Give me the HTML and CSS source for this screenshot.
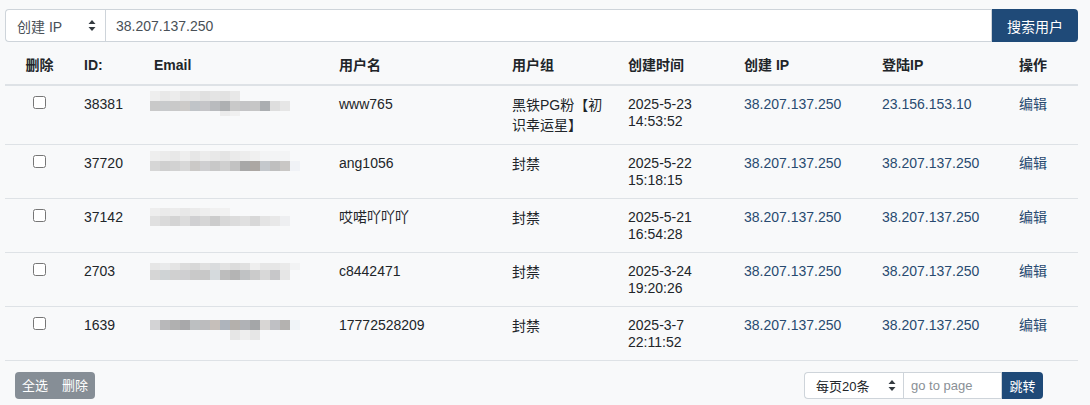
FILE: index.html
```html
<!DOCTYPE html>
<html lang="zh-CN">
<head>
    <meta charset="UTF-8">
    <title>用户管理</title>
    <link rel="stylesheet" href="styles.css">
</head>
<body>
<div class="wrap">
    <form class="search-bar">
        <div class="fake-select">
            <span>创建 IP</span>
            <svg width="8" height="13" viewBox="0 0 8 13"><path d="M4 1 L7.5 5 H0.5 Z M4 12 L7.5 8 H0.5 Z" fill="#343a40"/></svg>
        </div>
        <input type="text" class="search-input" value="38.207.137.250">
        <button type="button" class="btn-primary">搜索用户</button>
    </form>

    <table class="user-table">
        <colgroup>
            <col style="width:69px"><col style="width:70px"><col style="width:185px">
            <col style="width:173px"><col style="width:116px"><col style="width:116px">
            <col style="width:138px"><col style="width:137px"><col style="width:69px">
        </colgroup>
        <thead>
            <tr>
                <th class="center">删除</th>
                <th>ID:</th>
                <th>Email</th>
                <th>用户名</th>
                <th>用户组</th>
                <th>创建时间</th>
                <th>创建 IP</th>
                <th>登陆IP</th>
                <th>操作</th>
            </tr>
        </thead>
        <tbody>
            <tr>
                <td class="center"><input type="checkbox"></td>
                <td>38381</td>
                <td><div class="mosaic m1"></div></td>
                <td>www765</td>
                <td class="group">黑铁PG粉【初识幸运星】</td>
                <td>2025-5-23<br>14:53:52</td>
                <td class="link">38.207.137.250</td>
                <td class="link">23.156.153.10</td>
                <td class="link">编辑</td>
            </tr>
            <tr>
                <td class="center"><input type="checkbox"></td>
                <td>37720</td>
                <td><div class="mosaic m2"></div></td>
                <td>ang1056</td>
                <td class="group">封禁</td>
                <td>2025-5-22<br>15:18:15</td>
                <td class="link">38.207.137.250</td>
                <td class="link">38.207.137.250</td>
                <td class="link">编辑</td>
            </tr>
            <tr>
                <td class="center"><input type="checkbox"></td>
                <td>37142</td>
                <td><div class="mosaic m3"></div></td>
                <td>哎喏吖吖吖</td>
                <td class="group">封禁</td>
                <td>2025-5-21<br>16:54:28</td>
                <td class="link">38.207.137.250</td>
                <td class="link">38.207.137.250</td>
                <td class="link">编辑</td>
            </tr>
            <tr>
                <td class="center"><input type="checkbox"></td>
                <td>2703</td>
                <td><div class="mosaic m4"></div></td>
                <td>c8442471</td>
                <td class="group">封禁</td>
                <td>2025-3-24<br>19:20:26</td>
                <td class="link">38.207.137.250</td>
                <td class="link">38.207.137.250</td>
                <td class="link">编辑</td>
            </tr>
            <tr>
                <td class="center"><input type="checkbox"></td>
                <td>1639</td>
                <td><div class="mosaic m5"></div></td>
                <td>17772528209</td>
                <td class="group">封禁</td>
                <td>2025-3-7<br>22:11:52</td>
                <td class="link">38.207.137.250</td>
                <td class="link">38.207.137.250</td>
                <td class="link">编辑</td>
            </tr>
        </tbody>
    </table>

    <div class="table-footer">
        <div class="btn-group">
            <button type="button" class="btn-gray">全选</button>
            <button type="button" class="btn-gray">删除</button>
        </div>
        <div class="pager">
            <div class="fake-select small">
                <span>每页20条</span>
                <svg width="8" height="13" viewBox="0 0 8 13"><path d="M4 1 L7.5 5 H0.5 Z M4 12 L7.5 8 H0.5 Z" fill="#343a40"/></svg>
            </div>
            <input type="text" class="page-input" placeholder="go to page">
            <button type="button" class="btn-primary small">跳转</button>
        </div>
    </div>
</div>
</body>
</html>
```

FILE: styles.css
```css
body {
    margin: 0;
    background-color: #f8f9fa;
    font-family: "Liberation Sans", Arial, "Noto Sans CJK SC", sans-serif;
    font-size: 14px;
    color: #212529;
}

.wrap {
    padding: 9px 12px 0 5px;
}

/* search bar */
.search-bar {
    display: flex;
    height: 33px;
    margin: 0;
}

.fake-select {
    width: 100px;
    box-sizing: border-box;
    display: flex;
    align-items: center;
    justify-content: space-between;
    padding: 0 9px 0 11px;
    background-color: #fff;
    border: 1px solid #ced4da;
    border-right: none;
    border-radius: 4px 0 0 4px;
    color: #495057;
}

.search-input {
    flex: 1;
    box-sizing: border-box;
    height: 33px;
    margin: 0;
    padding: 0 10px;
    border: 1px solid #ced4da;
    border-radius: 0;
    font-family: inherit;
    font-size: 14px;
    color: #495057;
    outline: none;
}

.btn-primary {
    width: 86px;
    border: none;
    border-radius: 0 4px 4px 0;
    background-color: #1f4a78;
    color: #fff;
    font-family: inherit;
    font-size: 14px;
    padding: 0;
    cursor: pointer;
}

/* table */
.user-table {
    width: 1073px;
    table-layout: fixed;
    border-collapse: collapse;
    margin-top: 5px;
}

.user-table th,
.user-table td {
    text-align: left;
    vertical-align: top;
    padding: 10px 10px 9px;
    line-height: 17px;
}

.user-table th {
    padding-bottom: 10px;
    font-weight: bold;
    border-bottom: 2px solid #dee2e6;
}

.user-table tbody tr {
    border-bottom: 1px solid #dee2e6;
}

.user-table .center {
    text-align: center;
}

.user-table input[type="checkbox"] {
    display: block;
    width: 13px;
    height: 13px;
    margin: 0 auto;
}

.user-table .group {
    line-height: 19.5px;
}

.user-table .link {
    color: #284a70;
}

/* blurred emails */
.mosaic {
    width: 150px;
    height: 30px;
    margin: -5px 0 -8px -4px;
}

.m1 {
    background:
        linear-gradient(90deg, #c9c9c9 0 10px, #c8cacc 10px 20px, #c9c9c9 20px 30px, #cdcbc9 30px 40px, #c0c4c8 40px 50px, #c5c5c8 50px 60px, #b9bbbe 60px 70px, #aeb0b2 70px 80px, #c9c9c9 80px 90px, #c4c4c6 90px 100px, #c6c6c6 100px 110px, #abaeb1 110px 120px, #dedede 120px 130px, #e6e6e6 130px 140px) 0 10px / 140px 10px no-repeat,
        linear-gradient(90deg, #eeeeee 0 10px, #e8e8e8 10px 20px, #ececec 20px 30px, #e4e4e4 30px 40px, #e6e6e6 40px 50px, #e0e0e0 50px 60px, #e4e4e4 60px 70px, #e2e2e2 70px 80px, #e8e8e8 80px 90px) 0 0 / 90px 10px no-repeat,
        linear-gradient(90deg, #ececec 0 10px, #f0f0f0 10px 20px) 70px 20px / 20px 5px no-repeat;
}

.m2 {
    background:
        linear-gradient(90deg, #d6d6d6 0 10px, #cfcfcf 10px 20px, #d2d2d2 20px 30px, #d8d8d8 30px 40px, #cbc9c7 40px 50px, #cfcfd1 50px 60px, #c8c8c8 60px 70px, #cfcfcf 70px 80px, #c2c2c2 80px 90px, #a8a8a8 90px 100px, #aca7a3 100px 110px, #c4c8cc 110px 120px, #bfbfbf 120px 130px, #c9c7c5 130px 140px, #f0f2f6 140px 150px) 0 11px / 150px 10px no-repeat,
        linear-gradient(90deg, #eeeeee 0 10px, #ebebeb 10px 20px, #e8e8e8 20px 30px, #eeeeee 30px 40px, #e6e6e6 40px 50px, #ececec 50px 60px, #e8e8e8 60px 70px, #e4e4e4 70px 80px, #eaeaea 80px 90px, #ededed 90px 100px, #f0f0f0 100px 110px, #f3f4f5 110px 140px) 0 1px / 140px 10px no-repeat;
}

.m3 {
    background:
        linear-gradient(90deg, #e0e0e0 0 10px, #dadada 10px 20px, #d4d4d4 20px 30px, #dcdcdc 30px 40px, #d0d0d2 40px 50px, #d6d6d6 50px 60px, #cccccc 60px 70px, #d8d8d8 70px 80px, #dcdcdc 80px 90px, #e0e0e0 90px 100px, #d8d8d8 100px 110px, #e4e4e4 110px 120px, #e8e8e8 120px 130px, #eeeff1 130px 140px) 0 12px / 140px 10px no-repeat,
        linear-gradient(90deg, #eeeeee 0 10px, #eaeaea 10px 20px, #ececec 20px 30px, #e8e8e8 30px 40px, #ebebeb 40px 50px, #eeeeee 50px 60px, #f1f1f1 60px 80px) 0 4px / 80px 8px no-repeat;
}

.m4 {
    background:
        linear-gradient(90deg, #d6d6d6 0 10px, #cfd3d5 10px 20px, #d0d0d0 20px 30px, #cfcfd1 30px 40px, #c9c9c9 40px 50px, #c8c8c8 50px 60px, #d5dadd 60px 70px, #bdbdbd 70px 80px, #b4b4b4 80px 90px, #c0c2c4 90px 100px, #cbcbcb 100px 110px, #d8d8d8 110px 120px, #c7c7c9 120px 130px, #e6e6e6 130px 140px) 0 12px / 140px 10px no-repeat,
        linear-gradient(90deg, #e6e6e6 0 10px, #e9eaeb 10px 20px, #e4e4e4 20px 30px, #dcdcdc 30px 40px, #d8d8d8 40px 50px, #e0e0e0 50px 60px, #dadcde 60px 70px, #e2e2e2 70px 80px, #dcdcdc 80px 90px, #e0e0e0 90px 100px, #eeeeee 100px 110px, #e6e6e6 110px 130px, #eaeaea 130px 140px, #f2f3f4 140px 150px) 0 5px / 150px 7px no-repeat;
}

.m5 {
    background:
        linear-gradient(90deg, #d3d3d5 0 10px, #b8b8ba 10px 20px, #b0b0b0 20px 30px, #a8a8aa 30px 40px, #bcbfc1 40px 50px, #bcbcbe 50px 60px, #c6bfba 60px 70px, #aeb4bc 70px 80px, #b4b0ac 80px 90px, #b0b2b6 90px 100px, #a4a6a8 100px 110px, #d8d6d4 110px 120px, #bfc0c4 120px 130px, #b4b2b0 130px 140px, #f0f4f8 140px 150px) 0 8px / 150px 10px no-repeat,
        linear-gradient(90deg, #e6e6e6 0 10px, #eeeeee 10px 20px, #e6e6e6 20px 30px) 80px 18px / 30px 10px no-repeat;
}

/* footer */
.table-footer {
    display: flex;
    justify-content: space-between;
    padding: 11px 35px 0 10px;
}

.btn-group {
    display: flex;
    background-color: #868e96;
    border-radius: 4px;
}

.btn-gray {
    border: none;
    background: transparent;
    color: #fff;
    font-family: inherit;
    font-size: 13px;
    line-height: 19px;
    padding: 4px 7px;
    cursor: pointer;
}

.pager {
    display: flex;
    height: 27px;
}

.fake-select.small {
    width: 99px;
    font-size: 13px;
    color: #212529;
    padding: 0 7px 0 11px;
}

.page-input {
    width: 99px;
    box-sizing: border-box;
    height: 27px;
    margin: 0;
    padding: 0 7px;
    border: 1px solid #ced4da;
    border-radius: 0;
    font-family: inherit;
    font-size: 13px;
    outline: none;
}

.page-input::placeholder {
    color: #8a9096;
}

.btn-primary.small {
    width: 41px;
    font-size: 13px;
}
```
